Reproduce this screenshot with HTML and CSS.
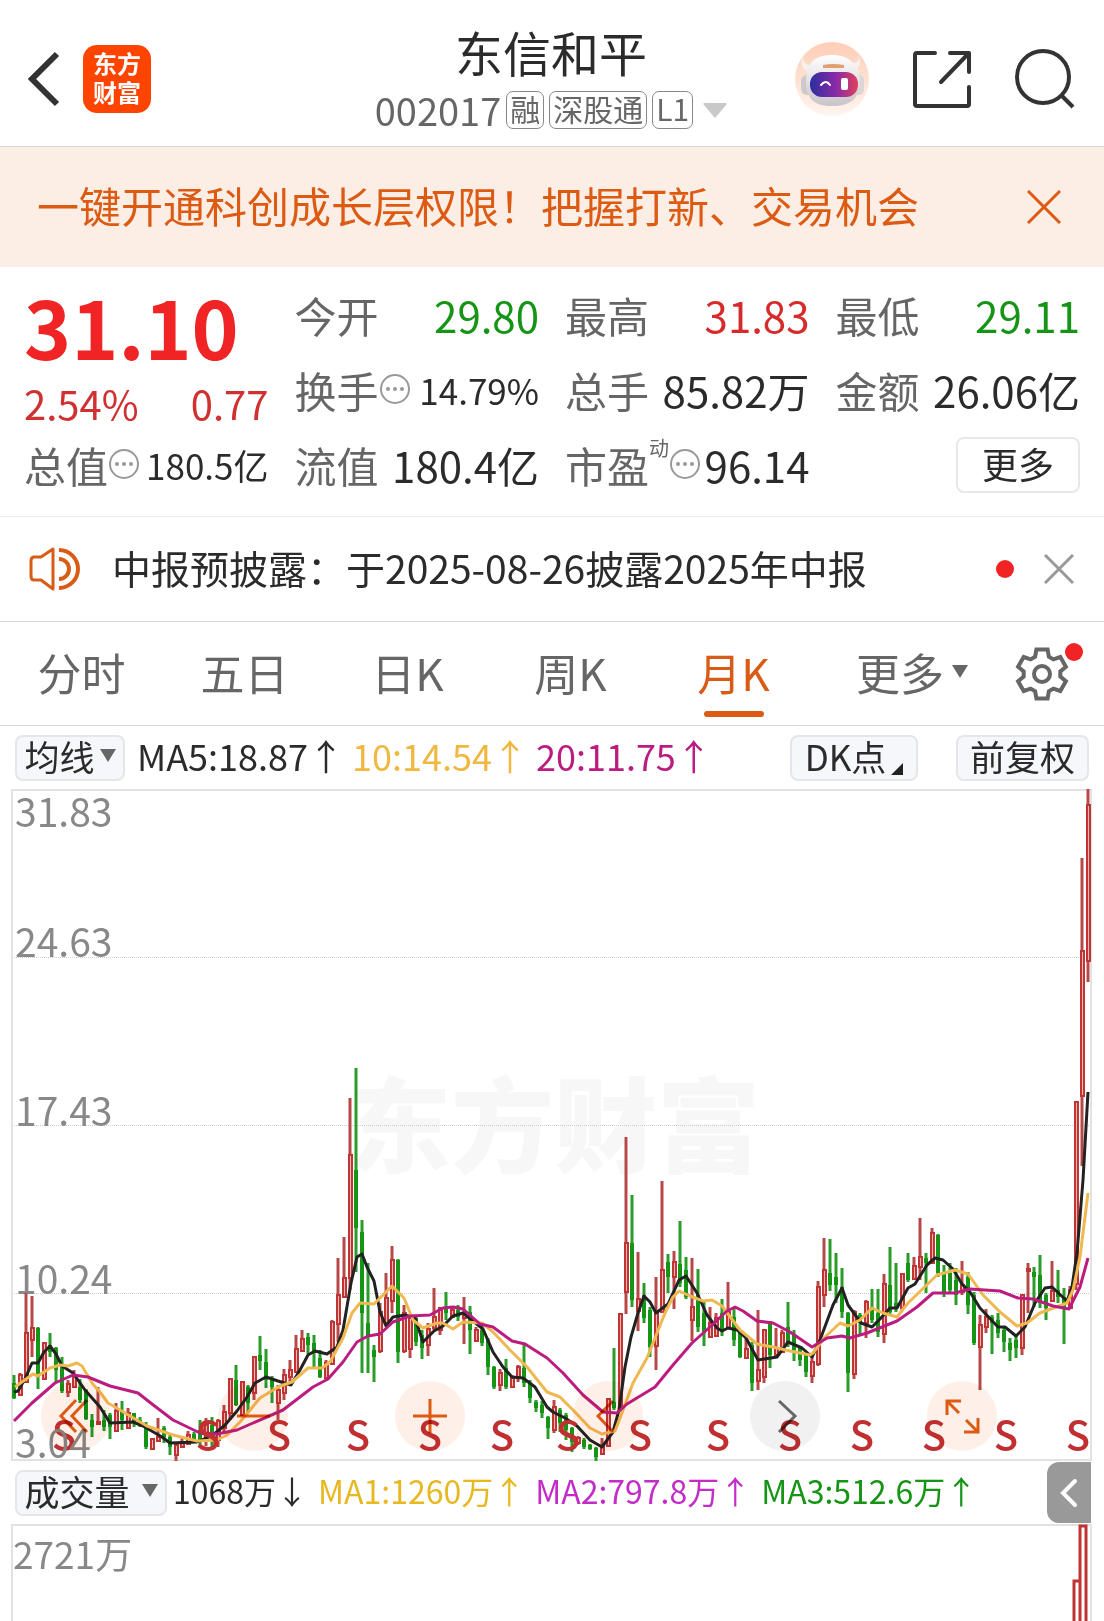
FILE: index.html
```html
<!DOCTYPE html>
<html lang="zh-CN">
<head>
<meta charset="utf-8">
<meta name="viewport" content="width=device-width, initial-scale=1">
<title>东信和平 002017</title>
<link rel="stylesheet" href="styles.css">
</head>
<body>
<header class="topbar">
  <div class="topbar-side">
    <button class="icon-btn" aria-label="返回">
      <svg width="36" height="58" viewBox="0 0 36 58"><path d="M31 4 6 29l25 25" fill="none" stroke="#333" stroke-width="6"/></svg>
    </button>
    <a class="logo" href="#"><span>东方</span><span>财富</span></a>
  </div>
  <div class="stock">
    <h1 class="stock-name">东信和平</h1>
    <button class="stock-sub">
      <span class="stock-code">002017</span>
      <span class="tag">融</span><span class="tag">深股通</span><span class="tag">L1</span>
      <svg class="sub-caret" width="24" height="16" viewBox="0 0 24 16"><path d="M2 1h20a1 1 0 0 1 1 2L13 15q-1 1-2 0L1 3a1 1 0 0 1 1-2Z" fill="#c9c9c9"/></svg>
    </button>
  </div>
  <div class="topbar-side topbar-actions">
    <button class="icon-btn" aria-label="智能助手">
      <svg width="76" height="76" viewBox="0 0 76 76">
        <defs>
          <linearGradient id="halo" x1="0" y1="0" x2="0" y2="1"><stop offset="0" stop-color="#ffcdb5"/><stop offset="1" stop-color="#fff5ef"/></linearGradient>
          <linearGradient id="visor" x1="0" y1="0" x2="1" y2="0"><stop offset="0" stop-color="#2b2f9e"/><stop offset=".55" stop-color="#8a2aa8"/><stop offset="1" stop-color="#e0425a"/></linearGradient>
          <linearGradient id="shell" x1="0" y1="0" x2="0" y2="1"><stop offset="0" stop-color="#fff"/><stop offset="1" stop-color="#c9c3c9"/></linearGradient>
        </defs>
        <circle cx="38" cy="38" r="37" fill="url(#halo)"/>
        <path d="M9 15q-1 8 10 10l-3 7Q4 27 9 15ZM65 15q4 10-6 17l-5-8q11-1 11-9Z" fill="#f6f0f0"/>
        <rect x="7" y="34" width="12" height="20" rx="6" fill="#cfc8cc"/><rect x="59" y="34" width="11" height="20" rx="5" fill="#ddd5d8"/>
        <path d="M38 14c17 0 28 10 28 26 0 18-10 25-28 25S12 58 12 40s9-26 26-26Z" fill="url(#shell)"/>
        <path d="M29 24q10-2 21 0v3H29Z" fill="#e0a070"/>
        <rect x="16" y="31" width="48" height="25" rx="12" fill="url(#visor)"/>
        <path d="M27 44q5-6 9 0" fill="none" stroke="#fff" stroke-width="2" stroke-linecap="round"/>
        <rect x="47" y="37" width="7" height="12" rx="2" fill="#fff"/>
      </svg>
    </button>
    <button class="icon-btn" aria-label="分享">
      <svg width="60" height="60" viewBox="0 0 60 60" fill="none" stroke="#333" stroke-width="4" stroke-linejoin="round" stroke-linecap="round"><path d="M23 4H5Q3 4 3 6v49q0 2 2 2h50q2 0 2-2V38M38 4h19v19M56 5 29 33"/></svg>
    </button>
    <button class="icon-btn" aria-label="搜索">
      <svg width="62" height="62" viewBox="0 0 62 62" fill="none" stroke="#333" stroke-width="4"><circle cx="29" cy="29" r="26"/><path d="m47 47 12 12"/></svg>
    </button>
  </div>
</header>

<section class="banner">
  <a class="banner-link" href="#">一键开通科创成长层权限！把握打新、交易机会</a>
  <button class="icon-btn" aria-label="关闭">
    <svg width="34" height="34" viewBox="0 0 34 34" stroke="#dd5a12" stroke-width="3"><path d="m1 1 32 32M33 1 1 33"/></svg>
  </button>
</section>

<section class="quote">
  <div class="quote-main">
    <div class="price">31.10</div>
    <div class="change"><span>2.54%</span><span>0.77</span></div>
  </div>
  <div class="cell"><span class="label">今开</span><span class="down">29.80</span></div>
  <div class="cell"><span class="label">最高</span><span class="up">31.83</span></div>
  <div class="cell"><span class="label">最低</span><span class="down">29.11</span></div>
  <div class="cell"><span class="label">换手<svg class="info" viewBox="0 0 32 32"><use href="#info-dots"/></svg></span><span class="value-m">14.79%</span></div>
  <div class="cell"><span class="label">总手</span><span>85.82万</span></div>
  <div class="cell"><span class="label">金额</span><span>26.06亿</span></div>
  <div class="cell"><span class="label">总值<svg class="info" viewBox="0 0 32 32"><use href="#info-dots"/></svg></span><span class="value-m">180.5亿</span></div>
  <div class="cell"><span class="label">流值</span><span>180.4亿</span></div>
  <div class="cell"><span class="label">市盈<span class="note">动</span><svg class="info" viewBox="0 0 32 32"><use href="#info-dots"/></svg></span><span class="value-l">96.14</span></div>
  <div class="cell cell-end"><button class="more">更多</button></div>
</section>

<section class="notice">
  <svg width="52" height="46" viewBox="0 0 52 46" fill="none" stroke="#d85c16" stroke-width="4"><path d="M24 3v40L12 34H5q-3 0-3-4V15q0-4 3-4h7Z" stroke-width="3" stroke-linejoin="round"/><path d="M30 13a10 10 0 0 1 0 20M30 4a19 19 0 0 1 0 38"/></svg>
  <a class="notice-text" href="#">中报预披露：于2025-08-26披露2025年中报</a>
  <span class="dot"></span>
  <button class="icon-btn" aria-label="关闭">
    <svg width="30" height="30" viewBox="0 0 30 30" stroke="#999" stroke-width="3"><path d="m1 1 28 28M29 1 1 29"/></svg>
  </button>
</section>

<nav class="tabs">
  <button class="tab">分时</button>
  <button class="tab">五日</button>
  <button class="tab">日K</button>
  <button class="tab">周K</button>
  <button class="tab tab-on">月K</button>
  <button class="tab">更多<svg width="16" height="14" viewBox="0 0 16 14"><path d="M0 0h16L8 13Z" fill="#666"/></svg></button>
  <button class="tab tab-gear" aria-label="设置">
    <svg width="56" height="56" viewBox="-28 -28 56 56" fill="none" stroke="#666" stroke-width="4"><path d="M-5.600-24.400H5.600L6.900-17.200 11.400-14.600 18.300-17 23.900-7.300 18.300-2.600V2.600L23.900 7.300 18.300 17 11.400 14.600 6.900 17.200 5.600 24.400H-5.600L-6.900 17.200-11.400 14.600-18.300 17-23.900 7.300-18.300 2.600V-2.600L-23.900-7.300-18.300-17-11.400-14.600-6.900-17.200Z"/><circle r="8"/></svg>
    <span class="dot badge"></span>
  </button>
</nav>

<div class="bar">
  <button class="chip">均线<svg width="16" height="14" viewBox="0 0 16 14"><path d="M0 0h16L8 13Z" fill="#666"/></svg></button>
  <div class="readout">
    <span>MA5:18.87↑</span><span class="ma10">10:14.54↑</span><span class="ma20">20:11.75↑</span>
  </div>
  <div class="bar-end">
    <button class="chip chip-dk">DK点<svg width="12" height="12" viewBox="0 0 12 12"><path d="M12 0v12H0Z" fill="#222"/></svg></button>
    <button class="chip chip-wide">前复权</button>
  </div>
</div>

<div class="chart">
  <svg class="plot" id="kline" viewBox="0 789 1104 672" role="img" aria-label="月K线图">
    <text class="watermark" x="348" y="1165">东方财富</text>
    <path class="grid" d="M12 957.500H1091M12 1125.500H1091M12 1293.500H1091"/>
    <g class="axis"><text x="15" y="827">31.83</text><text x="15" y="957">24.63</text><text x="15" y="1126">17.43</text><text x="15" y="1294">10.24</text></g>
    <path class="frame" d="M12 790H1091V1460H12Z"/>
    <g id="candles"></g>
    <path class="line line5" d="M14 1392 18 1391 25 1379 32 1363 38 1363 44 1352 50 1346 56 1354 62 1366 73 1373 85 1390 100 1407 110 1423 133 1422 143 1426 162 1437 170 1443 197 1442 213 1435 225 1425 237 1411 247 1397 255 1383 266 1377 278 1381 291 1385 300 1370 308 1355 315 1351 327 1354 337 1347 343 1330 351 1283 357 1257 362 1254 367 1267 374 1281 380 1312 386 1326 393 1317 405 1315 415 1318 423 1342 434 1331 443 1326 453 1316 463 1313 473 1321 483 1329 493 1352 503 1367 512 1377 523 1378 535 1387 547 1407 553 1412 565 1418 577 1426 590 1440 602 1447 613 1432 619 1410 625 1367 631 1337 638 1313 644 1296 650 1302 656 1313 668 1304 679 1280 686 1276 697 1293 707 1315 717 1328 722 1331 728 1328 737 1330 746 1338 758 1360 777 1357 788 1342 802 1348 812 1357 820 1340 833 1305 842 1288 848 1305 861 1323 872 1327 880 1319 890 1308 897 1308 908 1288 915 1284 927 1265 935 1258 943 1260 953 1269 962 1284 970 1292 980 1308 998 1327 1005 1327 1016 1336 1025 1327 1035 1303 1045 1288 1052 1287 1067 1301 1072 1287 1077 1253 1083 1180 1088 1092"/>
    <path class="line line10" d="M15 1387 33 1374 38 1376 50 1368 60 1365 68 1366 77 1363 82 1366 92 1383 100 1392 108 1403 120 1410 147 1426 173 1435 197 1441 217 1440 227 1435 240 1422 260 1398 280 1386 292 1382 308 1368 322 1368 330 1362 343 1338 352 1313 360 1303 374 1304 392 1286 404 1298 413 1320 423 1328 437 1323 443 1323 453 1329 463 1322 482 1323 493 1332 510 1350 527 1367 547 1392 560 1397 573 1410 590 1428 602 1434 615 1431 623 1410 633 1383 647 1358 657 1333 665 1313 673 1297 679 1291 690 1296 703 1301 712 1300 722 1306 740 1330 757 1344 773 1347 790 1351 810 1355 813 1353 825 1337 840 1323 848 1326 860 1320 872 1308 883 1313 897 1317 908 1303 937 1275 955 1270 968 1274 983 1295 1000 1312 1017 1326 1027 1323 1040 1313 1067 1303 1073 1290 1080 1257 1088 1193"/>
    <path class="line line20" d="M14 1421 32 1403 55 1383 73 1375 88 1377 110 1386 138 1393 152 1404 173 1420 200 1433 217 1434 237 1430 253 1423 283 1410 313 1387 328 1379 343 1362 357 1342 368 1336 380 1334 393 1322 410 1316 430 1315 443 1308 453 1307 463 1309 480 1324 493 1327 512 1341 525 1344 547 1358 563 1373 583 1395 603 1412 617 1413 627 1404 655 1387 673 1365 692 1343 710 1327 727 1311 735 1307 743 1311 757 1321 773 1323 790 1332 812 1347 827 1338 842 1336 850 1338 867 1333 897 1321 917 1307 933 1293 955 1293 970 1289 1000 1291 1018 1298 1033 1299 1053 1306 1069 1309 1080 1287 1088 1258"/>
    <g class="signal"><text x="64" y="1450">S</text><text x="208" y="1450">S</text><text x="279" y="1450">S</text><text x="358" y="1450">S</text><text x="430" y="1450">S</text><text x="502" y="1450">S</text><text x="568" y="1450">S</text><text x="640" y="1450">S</text><text x="718" y="1450">S</text><text x="790" y="1450">S</text><text x="862" y="1450">S</text><text x="934" y="1450">S</text><text x="1006" y="1450">S</text><text x="1078" y="1450">S</text></g>
    <g class="axis"><text x="15" y="1458">3.04</text></g>
  </svg>
  <div class="tools">
    <button class="tool" aria-label="最左"><svg viewBox="0 0 70 70"><path d="M35 19 20 35l15 16M46 19 31 35l15 16"/></svg></button>
    <button class="tool" aria-label="缩小"><svg viewBox="0 0 70 70"><path d="M19 35h33"/></svg></button>
    <button class="tool" aria-label="放大"><svg viewBox="0 0 70 70"><path d="M18 35h34M35 18v34"/></svg></button>
    <button class="tool" aria-label="左移"><svg viewBox="0 0 70 70"><path d="M40 20 25 35l15 16"/></svg></button>
    <button class="tool tool-off" aria-label="右移"><svg viewBox="0 0 70 70"><path d="m29 20 16 15-16 16"/></svg></button>
    <button class="tool" aria-label="全屏"><svg viewBox="0 0 70 70"><path d="M34 20H20v14M20 20l12 12M51 37v14H37M51 51 39 39"/></svg></button>
  </div>
</div>

<div class="bar bar-volume">
  <button class="chip chip-volume">成交量<svg width="16" height="14" viewBox="0 0 16 14"><path d="M0 0h16L8 13Z" fill="#666"/></svg></button>
  <div class="readout readout-s">
    <span>1068万↓</span><span class="v1">MA1:1260万↑</span><span class="v2">MA2:797.8万↑</span><span class="v3">MA3:512.6万↑</span>
  </div>
  <button class="drawer" aria-label="展开"><svg width="18" height="30" viewBox="0 0 18 30"><path d="M15 3 3 15l12 12" fill="none" stroke="#fff" stroke-width="4" stroke-linecap="round"/></svg></button>
</div>

<svg class="plot" viewBox="0 1524 1104 97" role="img" aria-label="成交量图">
  <path class="frame" d="M12 1630V1525H1091V1630"/>
  <g class="axis axis-v"><text x="13" y="1569">2721万</text></g>
  <path class="vol" d="M1074 1630V1581H1079M1080 1630V1526H1086V1630"/>
</svg>

<svg class="defs" width="0" height="0" aria-hidden="true">
  <symbol id="info-dots" viewBox="0 0 32 32"><circle cx="16" cy="15" r="14" fill="none" stroke="#999" stroke-width="2"/><g fill="#999"><circle cx="9" cy="15" r="2"/><circle cx="16" cy="15" r="2"/><circle cx="23" cy="15" r="2"/></g></symbol>
</svg>
<script src="chart.js"></script>
</body>
</html>
```
FILE: styles.css
```css
* { box-sizing: border-box; }
body {
  margin: 0;
  background: #fff;
  color: #2b2b2b;
  font-family: "Noto Sans CJK SC", "Noto Sans", sans-serif;
  font-size: 42px;
  line-height: 1;
  overflow-x: hidden;
}
button {
  border: 0;
  padding: 0;
  margin: 0;
  background: none;
  color: inherit;
  font: inherit;
}
a { color: inherit; text-decoration: none; }
svg { display: block; flex: none; }
.defs { position: absolute; }
.icon-btn { display: flex; flex: none; }

.topbar {
  display: grid;
  grid-template-columns: 1fr auto 1fr;
  align-items: center;
  height: 147px;
  padding: 12px 28px 0 26px;
  border-bottom: 1px solid #d6d6d6;
}
.topbar-side { display: flex; align-items: center; gap: 21px; }
.topbar-actions { justify-content: flex-end; gap: 42px; }
.logo {
  display: flex;
  flex-direction: column;
  align-items: center;
  justify-content: center;
  width: 68px;
  height: 68px;
  padding-bottom: 4px;
  border-radius: 14px;
  background: #ff4400;
  color: #fff;
  font-size: 24px;
  font-weight: 700;
  line-height: 29px;
}
.stock { display: flex; flex-direction: column; align-items: center; gap: 14px; }
.stock-name { margin: -2px 0 2px; font-size: 48px; font-weight: 400; }
.stock-sub { display: flex; align-items: center; gap: 5px; color: #666; }
.stock-code { font-size: 38px; }
.tag {
  padding: 1px 3px 4px;
  border: 1px solid #888;
  border-radius: 7px;
  font-size: 30px;
  line-height: 31px;
}
.sub-caret { margin-left: 5px; }

.banner {
  display: flex;
  align-items: center;
  justify-content: space-between;
  height: 120px;
  padding: 0 43px 0 37px;
  background: #fceee5;
  color: #dd5a12;
}
.banner-link, .notice-text { padding-bottom: 4px; }

.quote {
  display: grid;
  grid-template-columns: repeat(4, 1fr);
  grid-auto-rows: 75px;
  column-gap: 26px;
  padding: 10px 24px 14px;
  border-bottom: 1px solid #ececec;
}
.quote-main {
  grid-row: span 2;
  display: flex;
  flex-direction: column;
  justify-content: space-between;
  padding: 8px 0 4px;
  color: #f02424;
}
.price { font-size: 80px; font-weight: 600; }
.change { display: flex; justify-content: space-between; font-size: 40px; color: #d03030; }
.cell { display: flex; align-items: center; justify-content: space-between; white-space: nowrap; }
.cell-end { justify-content: flex-end; }
.label { display: flex; align-items: center; color: #666; }
.info { width: 32px; height: 32px; }
.note { align-self: flex-start; margin-top: -6px; font-size: 20px; }
.value-l { font-size: 42px; }
.value-m { font-size: 35px; }
.up { color: #d52b2b; }
.down { color: #159415; }
.more {
  width: 124px;
  height: 56px;
  padding-bottom: 4px;
  border: 2px solid #e8e8e8;
  border-radius: 8px;
  font-size: 36px;
}

.notice {
  display: flex;
  align-items: center;
  height: 105px;
  padding: 0 30px 0 29px;
  border-bottom: 1px solid #d6d6d6;
  font-size: 39px;
}
.notice-text { flex: 1; padding-left: 31px; white-space: nowrap; }
.dot { width: 18px; height: 18px; margin-right: 30px; border-radius: 50%; background: #f02424; }

.tabs {
  display: grid;
  grid-template-columns: repeat(5, 1fr) 194px 95px;
  height: 104px;
  border-bottom: 1px solid #d6d6d6;
  color: #666;
  font-size: 44px;
}
.tab { position: relative; display: flex; align-items: center; justify-content: center; gap: 8px; padding-bottom: 3px; }
.tab-on { color: #d85c16; }
.tab-on::after {
  content: "";
  position: absolute;
  bottom: 8px;
  width: 60px;
  height: 6px;
  border-radius: 3px;
  background: #dd5a12;
}
.tab-gear { justify-content: flex-start; padding: 0 0 0 5px; }
.badge { position: absolute; top: 21px; right: 21px; margin: 0; }

.bar {
  display: flex;
  align-items: center;
  height: 63px;
  padding: 0 15px;
  font-size: 36px;
  white-space: nowrap;
}
.chip {
  display: flex;
  align-items: center;
  justify-content: center;
  gap: 5px;
  width: 110px;
  height: 46px;
  padding-bottom: 4px;
  border: 2px solid #e4e6ea;
  border-radius: 8px;
  background: #f6f7fa;
  font-size: 35px;
}
.readout { display: flex; gap: 8px; padding: 0 0 5px 12px; }
.readout-s { padding-left: 6px; font-size: 32px; gap: 10px; }
.bar-end { display: flex; gap: 38px; margin-left: auto; }
.chip-dk { width: 128px; }
.chip-dk svg { align-self: flex-end; }
.chip-wide { width: 133px; }
.chip-volume { width: 152px; gap: 12px; }
.bar-volume { padding-right: 13px; }
.ma10 { color: #f0b840; }
.ma20 { color: #bb1c80; }
.v1 { color: #e8b820; }
.v2 { color: #c42cc8; }
.v3 { color: #159415; }
.drawer {
  display: flex;
  align-items: center;
  justify-content: center;
  width: 44px;
  height: 61px;
  margin-left: auto;
  border-radius: 12px 0 0 12px;
  background: #999;
}

.chart { position: relative; }
.plot { width: 100%; height: auto; }
.frame { fill: none; stroke: #e2e2e2; stroke-width: 2; }
.grid { stroke: #ccc; stroke-width: 1; stroke-dasharray: 1 1; }
.watermark { font-size: 103px; font-weight: 900; fill: #f7f7f7; }
.axis { font-size: 39px; fill: #888; }
.axis-v { font-size: 37px; }
.line { fill: none; stroke-width: 3; stroke-linejoin: round; }
.line5 { stroke: #222; }
.line10 { stroke: #f0b850; }
.line20 { stroke: #bb1c80; }
.signal { font-size: 40px; font-weight: 500; fill: #c03030; text-anchor: middle; }
.rise { fill: #f0b8b8; stroke: #c03434; stroke-width: 2; }
.rise-wick { stroke: #b84848; stroke-width: 3; }
.fall { fill: #159415; }
.fall-wick { stroke: #2a9c2a; stroke-width: 3; }
.vol { fill: none; stroke: #c03434; stroke-width: 3; }

.tools {
  position: absolute;
  left: 0;
  right: 0;
  bottom: 10px;
  display: flex;
  justify-content: space-between;
  padding: 0 107px 0 41px;
}
.tool {
  width: 70px;
  height: 70px;
  border-radius: 50%;
  background: #fef0e8;
  mix-blend-mode: multiply;
}
.tool-off { background: #f1f1f1; }
.tool svg { fill: none; stroke: #dd5a12; stroke-width: 3; }
.tool-off svg { stroke: #666; }
```
FILE: chart.js
```js
// One row per month: direction, high, body top, body bottom, low
const months = `
g 1375 1383 1398 1399|r 1373 1375 1395 1396|r 1293 1333 1382 1383|r 1296 1328 1340 1357|g 1327 1328 1377 1389
r 1343 1343 1379 1379|g 1333 1345 1352 1357|g 1347 1348 1370 1382|g 1357 1365 1391 1393|r 1380 1384 1392 1397
r 1370 1375 1387 1387|g 1379 1387 1400 1403|g 1389 1390 1419 1420|g 1414 1420 1427 1437|r 1387 1422 1424 1424
g 1410 1420 1427 1431|g 1413 1415 1427 1439|r 1403 1411 1431 1432|g 1401 1412 1420 1430|r 1408 1413 1428 1429
g 1413 1413 1423 1427|g 1417 1420 1426 1427|g 1422 1425 1447 1449|r 1438 1439 1449 1449|r 1418 1437 1441 1442
g 1426 1428 1437 1443|g 1435 1437 1447 1455|r 1442 1445 1455 1461|r 1438 1442 1447 1448|r 1431 1435 1444 1445
g 1432 1434 1440 1443|g 1420 1430 1440 1447|r 1418 1425 1440 1446|g 1417 1425 1440 1450|r 1419 1421 1440 1447
r 1405 1412 1428 1433|r 1379 1379 1413 1420|g 1365 1380 1405 1406|r 1382 1382 1415 1416|g 1385 1387 1403 1413
r 1357 1357 1393 1400|g 1336 1355 1361 1370|g 1349 1362 1380 1388|g 1376 1379 1387 1403|r 1385 1390 1403 1420
r 1369 1375 1393 1400|r 1360 1370 1377 1383|r 1335 1349 1372 1373|r 1330 1339 1351 1351|g 1333 1337 1345 1354
g 1335 1343 1353 1367|g 1350 1358 1377 1378|r 1360 1363 1378 1379|r 1320 1322 1364 1365|r 1258 1295 1324 1342
r 1237 1278 1297 1297|r 1098 1155 1278 1290|g 1068 1170 1228 1272|g 1220 1232 1313 1373|g 1263 1323 1337 1373
g 1345 1350 1357 1382|r 1303 1312 1351 1353|r 1273 1298 1323 1325|r 1246 1260 1301 1313|g 1259 1260 1352 1363
r 1305 1313 1351 1353|r 1317 1318 1349 1358|g 1317 1318 1342 1346|g 1330 1335 1348 1359|r 1323 1329 1345 1356
r 1288 1317 1328 1330|r 1307 1308 1330 1335|g 1292 1307 1313 1320|r 1308 1310 1317 1318|g 1305 1310 1317 1321
r 1297 1313 1318 1344|g 1306 1312 1330 1354|r 1327 1330 1341 1342|g 1325 1330 1343 1346|g 1338 1340 1367 1375
g 1366 1367 1387 1389|r 1369 1373 1385 1391|g 1359 1368 1387 1389|r 1375 1378 1387 1388|r 1365 1367 1378 1382
g 1343 1368 1383 1387|g 1380 1383 1398 1403|g 1400 1402 1408 1412|g 1401 1405 1413 1418|g 1416 1417 1428 1439
r 1400 1407 1430 1433|g 1408 1410 1423 1432|g 1413 1415 1430 1440|g 1427 1428 1442 1452|r 1436 1438 1443 1445
g 1438 1440 1447 1449|g 1444 1445 1449 1450|g 1447 1448 1457 1461|r 1438 1447 1454 1454|r 1398 1399 1446 1447
g 1348 1402 1408 1410|r 1313 1314 1408 1409|r 1137 1243 1292 1314|g 1195 1243 1300 1307|r 1252 1299 1311 1331
g 1283 1295 1318 1323|g 1307 1310 1347 1357|r 1277 1313 1346 1370|r 1181 1270 1312 1313|g 1254 1262 1277 1293
r 1251 1262 1277 1309|g 1221 1264 1283 1287|g 1257 1270 1297 1299|r 1258 1307 1320 1341|g 1269 1295 1327 1332
g 1300 1313 1333 1346|r 1307 1323 1337 1338|r 1313 1318 1336 1337|g 1299 1313 1330 1336|r 1282 1312 1328 1328
g 1308 1317 1340 1346|g 1330 1333 1357 1358|r 1337 1349 1358 1358|g 1342 1345 1383 1391|r 1310 1370 1381 1390
r 1329 1330 1377 1383|g 1321 1323 1355 1368|r 1328 1348 1355 1357|r 1330 1333 1352 1352|g 1302 1327 1342 1347
g 1330 1335 1350 1361|g 1347 1348 1360 1366|g 1353 1355 1372 1377|r 1357 1362 1376 1383|r 1281 1287 1364 1366
r 1238 1270 1295 1307|g 1239 1273 1285 1291|g 1253 1277 1285 1303|g 1268 1287 1312 1318|g 1312 1313 1373 1392
r 1310 1312 1374 1379|g 1313 1315 1323 1334|r 1300 1302 1323 1338|g 1289 1307 1320 1323|g 1289 1313 1332 1337
r 1274 1284 1334 1343|g 1247 1285 1312 1315|g 1263 1303 1308 1312|r 1273 1274 1308 1310|g 1253 1263 1280 1282
r 1257 1266 1279 1280|r 1218 1257 1267 1280|g 1253 1258 1263 1293|r 1228 1233 1263 1264|g 1234 1235 1273 1277
g 1265 1273 1292 1297|g 1263 1273 1290 1293|g 1268 1280 1295 1305|r 1261 1285 1292 1295|g 1272 1277 1305 1314
g 1292 1295 1343 1345|r 1315 1325 1347 1390|r 1309 1317 1327 1333|g 1315 1317 1323 1354|g 1313 1320 1333 1338
g 1328 1330 1342 1352|g 1338 1343 1350 1361|g 1335 1340 1348 1358|r 1294 1295 1348 1355|r 1263 1269 1271 1313
g 1267 1272 1277 1307|g 1255 1275 1303 1308|g 1293 1295 1308 1320|r 1261 1291 1301 1302|g 1270 1290 1297 1303
g 1288 1297 1307 1344|r 1286 1290 1308 1309|r 1101 1102 1284 1290|r 858 951 1096 1166|r 789 805 961 982
`.trim().split(/[|\n]/);

const step = 6;
const firstX = 14;
let markup = "";
months.forEach((row, i) => {
  const [dir, ...levels] = row.split(" ");
  const [high, top, bottom, low] = levels.map(Number);
  const x = firstX + i * step;
  const kind = dir === "r" ? "rise" : "fall";
  markup += `<path class="${kind}-wick" d="M${x} ${high}V${low}"/>`;
  markup += dir === "r"
    ? `<rect class="rise" x="${x - 1}" y="${top}" width="3" height="${Math.max(bottom - top, 1)}"/>`
    : `<rect class="fall" x="${x - 2}" y="${top}" width="4" height="${bottom - top}"/>`;
});
document.getElementById("candles").innerHTML = markup;
```
